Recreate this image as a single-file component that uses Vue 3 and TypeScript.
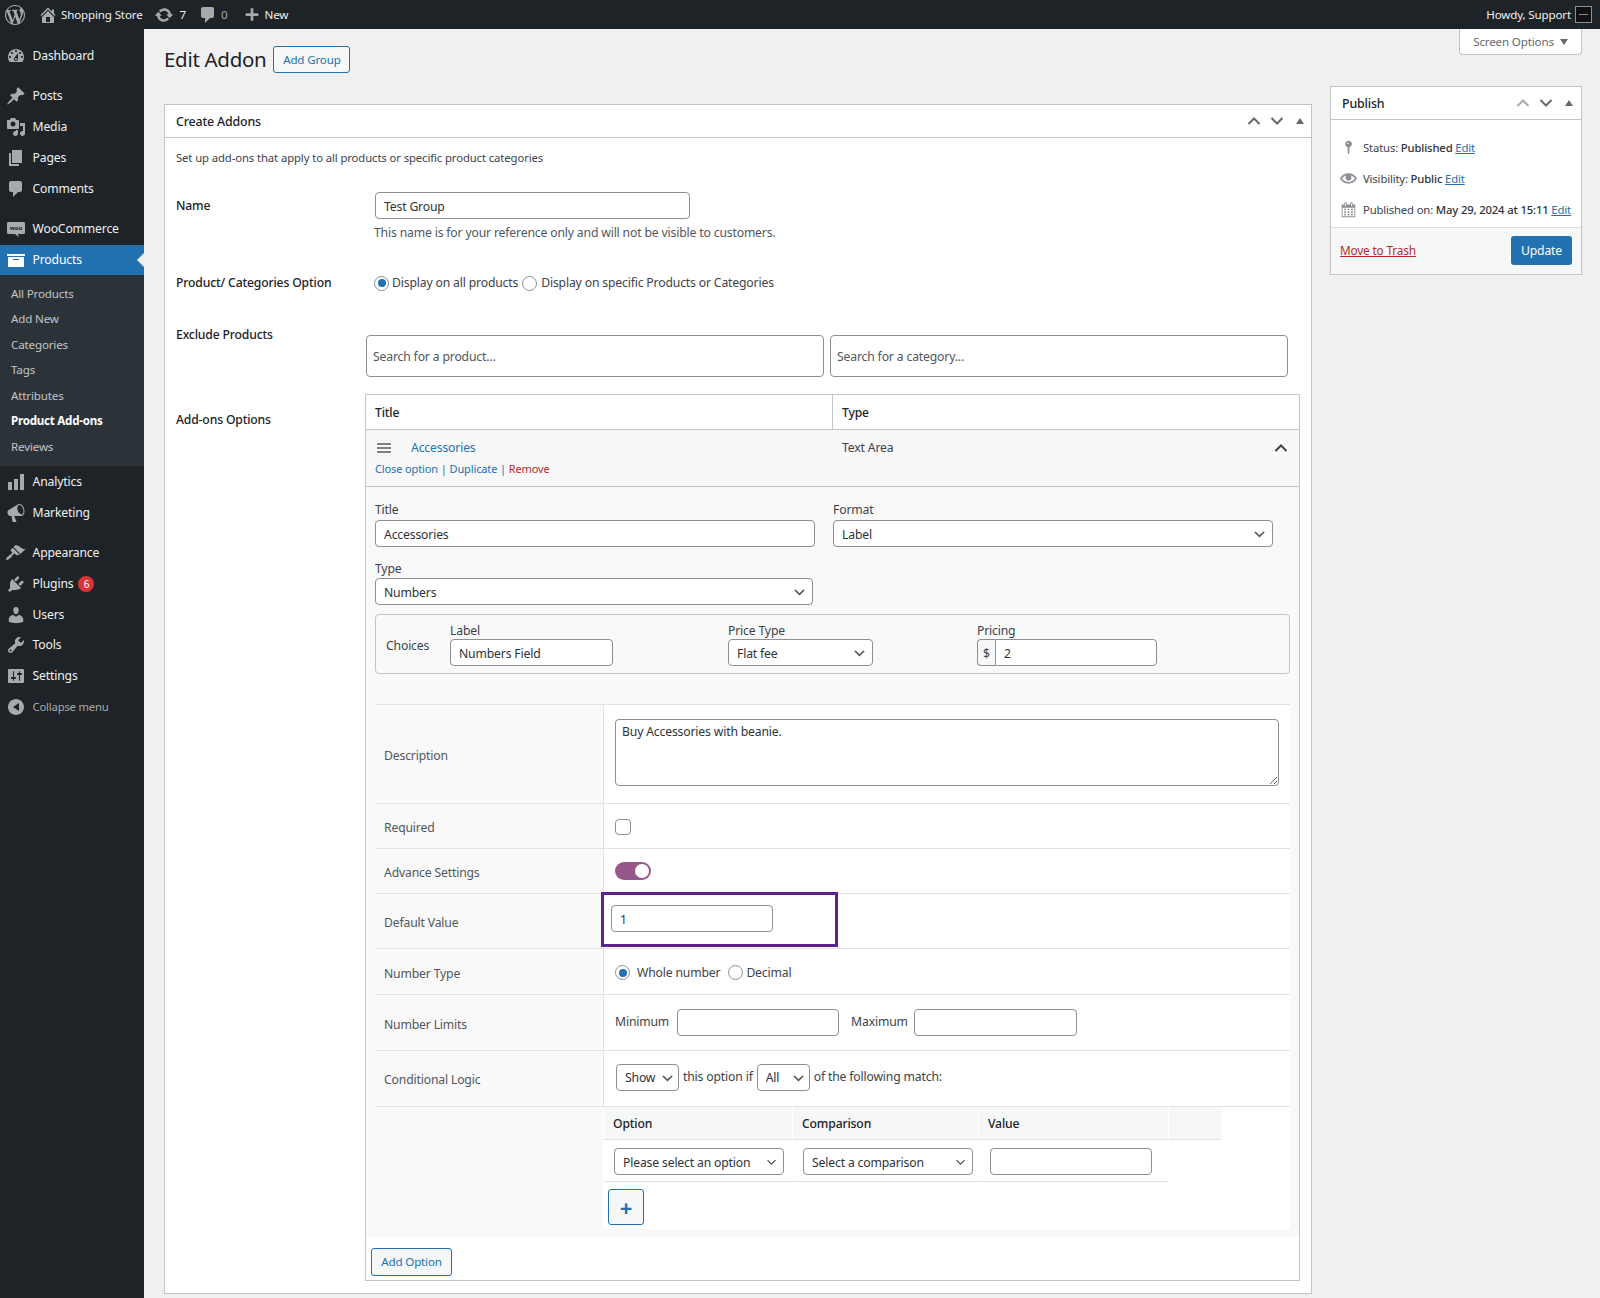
<script setup lang="ts">
interface MenuItem { label: string; d: string; sep?: boolean; current?: boolean; badge?: string; dim?: boolean; woo?: boolean }
const I = {
  wp: 'M20 10c0-5.51-4.49-10-10-10C4.48 0 0 4.49 0 10c0 5.52 4.48 10 10 10 5.51 0 10-4.48 10-10zM7.78 15.37L4.37 6.22c.55-.02 1.17-.08 1.17-.08.5-.06.44-1.13-.06-1.11 0 0-1.45.11-2.37.11-.18 0-.37 0-.58-.01C4.12 2.69 6.87 1.11 10 1.11c2.33 0 4.45.87 6.05 2.34-.68-.11-1.65.39-1.65 1.58 0 .74.45 1.36.9 2.1.35.61.55 1.36.55 2.46 0 1.49-1.4 5-1.4 5l-3.03-8.37c.54-.02.82-.17.82-.17.5-.05.44-1.25-.06-1.22 0 0-1.44.12-2.38.12-.87 0-2.33-.12-2.33-.12-.5-.03-.56 1.2-.06 1.22l.92.08 1.26 3.41zM17.41 10c.24-.64.74-1.87.43-4.25.7 1.29 1.05 2.71 1.05 4.25 0 3.29-1.73 6.24-4.4 7.78.97-2.59 1.94-5.2 2.92-7.78zM6.1 18.09C3.12 16.65 1.11 13.53 1.11 10c0-1.3.23-2.48.72-3.59C3.25 10.3 4.67 14.2 6.1 18.09zm4.03-6.63l2.58 6.98c-.86.29-1.76.45-2.71.45-.79 0-1.57-.11-2.29-.33.81-2.38 1.62-4.74 2.42-7.1z',
  home: 'M16 8.5l1.53 1.53-1.06 1.06L10 4.62l-6.47 6.47-1.06-1.06L10 2.5l4 4v-2h2v4zm-6-2.46l6 5.99V18H4v-5.97zM12 17v-5H8v5h4z',
  update: 'M10.2 3.28c3.53 0 6.43 2.61 6.92 6h2.08l-3.5 4-3.5-4h2.32c-.45-1.97-2.21-3.45-4.32-3.45-1.45 0-2.73.71-3.54 1.78L4.95 5.66C6.23 4.2 8.11 3.28 10.2 3.28zm-.4 13.44c-3.52 0-6.43-2.61-6.92-6H.8l3.5-4c1.17 1.33 2.33 2.67 3.5 4H5.48c.45 1.97 2.21 3.45 4.32 3.45 1.45 0 2.73-.71 3.54-1.78l1.71 1.95c-1.28 1.46-3.15 2.38-5.25 2.38z',
  comment: 'M5 2h9c1.1 0 2 .9 2 2v7c0 1.1-.9 2-2 2h-2l-5 5v-5H5c-1.1 0-2-.9-2-2V4c0-1.1.9-2 2-2z',
  plus: 'M17 8v3h-5.5v5.5h-3V11H3V8h5.5V2.5h3V8H17z',
  dashboard: 'M3.76 16h12.48c1.1-1.37 1.76-3.11 1.76-5 0-4.42-3.58-8-8-8s-8 3.58-8 8c0 1.89.66 3.63 1.76 5zM10 4c.55 0 1 .45 1 1s-.45 1-1 1-1-.45-1-1 .45-1 1-1zM6 6c.55 0 1 .45 1 1s-.45 1-1 1-1-.45-1-1 .45-1 1-1zm8 0c.55 0 1 .45 1 1s-.45 1-1 1-1-.45-1-1 .45-1 1-1zm-5.37 5.55L12 7v6c0 1.1-.9 2-2 2s-2-.9-2-2c0-.57.24-1.08.63-1.45zM4 10c.55 0 1 .45 1 1s-.45 1-1 1-1-.45-1-1 .45-1 1-1zm12 0c.55 0 1 .45 1 1s-.45 1-1 1-1-.45-1-1 .45-1 1-1zm-5 3c0-.55-.45-1-1-1s-1 .45-1 1 .45 1 1 1 1-.45 1-1z',
  pin: 'M10.44 3.02l1.82-1.82 6.36 6.35-1.83 1.82c-1.05-.68-2.48-.57-3.41.36l-.75.75c-.92.93-1.04 2.35-.35 3.41l-1.83 1.82-2.41-2.41-2.8 2.79c-.42.42-3.38 2.71-3.8 2.29s1.86-3.39 2.28-3.81l2.79-2.79L4.1 9.36l1.83-1.82c1.05.69 2.48.57 3.4-.36l.75-.75c.93-.92 1.05-2.35.36-3.41z',
  media: 'M13 11V4c0-.55-.45-1-1-1h-1.67L9 1H5L3.67 3H2c-.55 0-1 .45-1 1v7c0 .55.45 1 1 1h10c.55 0 1-.45 1-1zM7 4.5c1.38 0 2.5 1.12 2.5 2.5S8.38 9.5 7 9.5 4.5 8.38 4.5 7 5.62 4.5 7 4.5zM14 6h5v10.5c0 1.38-1.12 2.5-2.5 2.5S14 17.88 14 16.5s1.12-2.5 2.5-2.5c.17 0 .34.02.5.05V9h-3V6zm-4 8.05V13h2v3.5c0 1.38-1.12 2.5-2.5 2.5S7 17.88 7 16.5 8.12 14 9.5 14c.17 0 .34.02.5.05z',
  page: 'M6 15V2h10v13H6zm-1 1h8v2H3V5h2v11z',
  woo: 'M2.5 3h15c1 0 1.5.6 1.5 1.5v9c0 1-.6 1.5-1.5 1.5H12l.7 3L9 15H2.5C1.5 15 1 14.4 1 13.5v-9C1 3.6 1.6 3 2.5 3z',
  archive: 'M19 4v2H1V4h18zM2 7h16v10H2V7zm11 3V9H7v1h6z',
  chart: 'M18 18V2h-4v16h4zm-6 0V7H8v11h4zm-6 0v-8H2v8h4z',
  mega: 'M18.15 5.94c.46 1.62.38 3.22-.02 4.48-.42 1.28-1.26 2.18-2.3 2.48-.16.06-.26.06-.4.06-.06.02-.12.02-.18.02-.06.02-.14.02-.22.02h-6.8l2.22 5.5c.02.14-.06.26-.14.34-.08.1-.24.16-.34.16H6.95c-.1 0-.26-.06-.34-.16-.08-.08-.16-.2-.14-.34l-1-5.5H4.25l-.02-.02c-.5.06-1.08-.18-1.54-.62s-.88-1.08-1.06-1.88c-.24-.8-.2-1.56-.02-2.2.18-.62.58-1.08 1.06-1.3l.02-.02 9-5.4c.1-.06.18-.1.24-.16.06-.04.14-.08.24-.12.16-.08.28-.12.5-.18 1.04-.3 2.24.1 3.22.98s1.84 2.24 2.26 3.86zm-2.58 5.98h-.02c.4-.1.74-.34 1.04-.7.58-.7.86-1.76.86-3.04-.02-.64-.1-1.3-.28-1.98-.34-1.36-1.02-2.5-1.78-3.24-.38-.38-.76-.66-1.14-.82-.18-.08-.34-.12-.5-.16h-.3c-.1 0-.22.02-.32.04-.38.1-.72.34-1.02.7-.72.94-.94 2.44-.54 4.12.04.18.1.36.18.62.3 1.06.82 1.98 1.46 2.62.64.66 1.4 1.04 2.36 1.04z',
  brush: 'M14.48 11.06L7.41 3.99l1.5-1.5c.5-.56 2.3-.47 3.51.32 1.21.8 1.43 1.28 2.91 2.1 1.18.64 2.45 1.26 4.45.85zm-.71.71L6.7 4.7 4.93 6.47c-.39.39-.39 1.02 0 1.41l1.06 1.06c.39.39.39 1.03 0 1.42-.6.6-1.43 1.11-2.21 1.69-.35.26-.7.53-1.01.84C1.43 13.23 0 15.3 0 16.5c0 .17.07.29.14.36.07.07.19.14.36.14 1.2 0 3.27-1.43 4.62-2.77.31-.31.58-.66.84-1.01.58-.78 1.09-1.61 1.69-2.21.39-.39 1.03-.39 1.42 0l1.06 1.06c.39.39 1.02.39 1.41 0z',
  plugin: 'M13.11 4.36L9.87 7.6 8 5.73l3.24-3.24c.35-.34 1.05-.2 1.56.32.52.51.66 1.21.31 1.55zm-8 1.77l.91-1.12 9.01 9.01-1.19.84c-.71.71-2.63 1.16-3.82 1.16H6.14L4.9 17.26c-.59.59-1.54.59-2.12 0-.59-.58-.59-1.53 0-2.12l1.24-1.24v-3.88c0-1.13.4-3.19 1.09-3.89zm7.26 3.97l3.24-3.24c.34-.35 1.04-.21 1.55.31.52.51.66 1.21.31 1.55l-3.24 3.25z',
  users: 'M10 9.25c-2.27 0-2.73-3.44-2.73-3.44C7 4.02 7.82 2 9.97 2c2.16 0 2.98 2.02 2.71 3.81 0 0-.41 3.44-2.68 3.44zm0 2.57L12.72 10c2.39 0 4.52 2.33 4.52 4.53v2.49s-3.65 1.13-7.24 1.13c-3.65 0-7.24-1.13-7.24-1.13v-2.49c0-2.25 1.94-4.48 4.47-4.48z',
  tools: 'M16.68 9.77c-1.34 1.34-3.3 1.67-4.95.99l-5.41 6.52c-.99.99-2.59.99-3.58 0s-.99-2.59 0-3.57l6.52-5.42c-.68-1.65-.35-3.61.99-4.95 1.28-1.28 3.12-1.62 4.72-1.06l-2.89 2.89 2.82 2.82 2.86-2.87c.53 1.58.18 3.39-1.08 4.65zM3.81 16.21c.4.39 1.04.39 1.43 0 .4-.4.4-1.04 0-1.43-.39-.4-1.03-.4-1.43 0-.39.39-.39 1.03 0 1.43z',
  settings: 'M18 16V4c0-.55-.45-1-1-1H3c-.55 0-1 .45-1 1v12c0 .55.45 1 1 1h14c.55 0 1-.45 1-1zM8 11h1c.55 0 1 .45 1 1s-.45 1-1 1H8v1.5c0 .28-.22.5-.5.5s-.5-.22-.5-.5V13H6c-.55 0-1-.45-1-1s.45-1 1-1h1V5.5c0-.28.22-.5.5-.5s.5.22.5.5V11zm5-2h-1c-.55 0-1-.45-1-1s.45-1 1-1h1V5.5c0-.28.22-.5.5-.5s.5.22.5.5V7h1c.55 0 1 .45 1 1s-.45 1-1 1h-1v5.5c0 .28-.22.5-.5.5s-.5-.22-.5-.5V9z',
  collapse: 'M18 10c0-4.42-3.58-8-8-8s-8 3.58-8 8 3.58 8 8 8 8-3.58 8-8zm-5-4v8l-6-4z',
  status: 'M14 6c0 1.86-1.28 3.41-3 3.86V16c0 1-1 2-1 2s-1-1-1-2V9.86C7.28 9.41 6 7.86 6 6c0-2.21 1.79-4 4-4s4 1.79 4 4zM8 5c0 .55.45 1 1 1s1-.45 1-1-.45-1-1-1-1 .45-1 1z',
  eye: 'M19.7 9.4C17.7 6 14 3.9 10 3.9S2.3 6 .3 9.4L0 10l.3.6c2 3.4 5.7 5.5 9.7 5.5s7.7-2.1 9.7-5.5l.3-.6-.3-.6zM10 14.1c-3.1 0-6-1.6-7.7-4.1C3.6 8 5.7 6.6 8 6.1c-.9.6-1.5 1.7-1.5 2.9 0 1.9 1.6 3.5 3.5 3.5s3.5-1.6 3.5-3.5c0-1.2-.6-2.3-1.5-2.9 2.3.5 4.4 1.9 5.7 3.9-1.7 2.5-4.6 4.1-7.7 4.1z',
  calendar: 'M15 4h3v15H2V4h3V3c0-.41.15-.76.44-1.06.29-.29.65-.44 1.06-.44s.77.15 1.06.44c.29.3.44.65.44 1.06v1h4V3c0-.41.15-.76.44-1.06.29-.29.65-.44 1.06-.44s.77.15 1.06.44c.29.3.44.65.44 1.06v1zM6 3v2.5c0 .14.05.26.15.36.09.09.21.14.35.14s.26-.05.35-.14c.1-.1.15-.22.15-.36V3c0-.14-.05-.26-.15-.35-.09-.1-.21-.15-.35-.15s-.26.05-.35.15c-.1.09-.15.21-.15.35zm7 0v2.5c0 .14.05.26.14.36.1.09.22.14.36.14s.26-.05.36-.14c.09-.1.14-.22.14-.36V3c0-.14-.05-.26-.14-.35-.1-.1-.22-.15-.36-.15s-.26.05-.36.15c-.09.09-.14.21-.14.35zm4 15V8H3v10h14zM7 9v2H5V9h2zm2 0h2v2H9V9zm4 2V9h2v2h-2zm-6 1v2H5v-2h2zm2 0h2v2H9v-2zm4 2v-2h2v2h-2zm-6 1v2H5v-2h2zm4 2H9v-2h2v2zm4 0h-2v-2h2v2z'
}
const menuTop: MenuItem[] = [
  { label: 'Dashboard', d: I.dashboard },
  { label: 'Posts', d: I.pin, sep: true },
  { label: 'Media', d: I.media },
  { label: 'Pages', d: I.page },
  { label: 'Comments', d: I.comment },
  { label: 'WooCommerce', d: I.woo, sep: true, woo: true },
]
const submenu = ['All Products', 'Add New', 'Categories', 'Tags', 'Attributes', 'Product Add-ons', 'Reviews']
const menuBottom: MenuItem[] = [
  { label: 'Analytics', d: I.chart },
  { label: 'Marketing', d: I.mega },
  { label: 'Appearance', d: I.brush, sep: true },
  { label: 'Plugins', d: I.plugin, badge: '6' },
  { label: 'Users', d: I.users },
  { label: 'Tools', d: I.tools },
  { label: 'Settings', d: I.settings },
  { label: 'Collapse menu', d: I.collapse, dim: true },
]
</script>

<template>
  <div class="page">
    <header class="adminbar">
      <svg class="bar-wp" viewBox="0 0 20 20"><path :d="I.wp" /></svg>
      <svg class="bar-home" viewBox="0 0 20 20"><path :d="I.home" /></svg>
      <span class="bar-site">Shopping Store</span>
      <svg class="bar-update" viewBox="0 0 20 20"><path :d="I.update" /></svg>
      <span class="bar-count">7</span>
      <svg class="bar-comment" viewBox="0 0 20 20"><path :d="I.comment" /></svg>
      <span class="bar-zero">0</span>
      <svg class="bar-plus" viewBox="0 0 20 20"><path :d="I.plus" /></svg>
      <span class="bar-new">New</span>
      <span class="bar-howdy">Howdy, Support</span>
      <span class="bar-avatar"><i></i></span>
    </header>

    <div class="layout">
      <nav class="sidebar">
        <a v-for="m in menuTop" :key="m.label" class="mi" :class="{ sep: m.sep }">
          <svg class="mi-ic" viewBox="0 0 20 20">
            <path :d="m.d" />
            <text v-if="m.woo" x="10" y="11" class="woo-t">woo</text>
          </svg>
          <span>{{ m.label }}</span>
        </a>
        <a class="mi current">
          <svg class="mi-ic" viewBox="0 0 20 20"><path :d="I.archive" /></svg>
          <span>Products</span>
          <i class="arrow"></i>
        </a>
        <ul class="sub">
          <li v-for="s in submenu" :key="s" :class="{ on: s === 'Product Add-ons' }">{{ s }}</li>
        </ul>
        <a v-for="m in menuBottom" :key="m.label" class="mi" :class="{ sep: m.sep, dim: m.dim }">
          <svg class="mi-ic" viewBox="0 0 20 20"><path :d="m.d" /></svg>
          <span>{{ m.label }}</span>
          <b v-if="m.badge" class="badge">{{ m.badge }}</b>
        </a>
      </nav>

      <main class="main">
        <div class="col-left">
          <div class="heading">
            <h1>Edit Addon</h1>
            <button class="btn">Add Group</button>
          </div>

          <section class="box">
            <div class="box-head">
              <h2>Create Addons</h2>
              <svg class="hc" viewBox="0 0 14 10"><path d="M1.5 8L7 2.5 12.5 8" /></svg>
              <svg class="hc" viewBox="0 0 14 10"><path d="M1.5 2L7 7.5 12.5 2" /></svg>
              <span class="tri-up"></span>
            </div>
            <div class="box-body">
              <p class="intro">Set up add-ons that apply to all products or specific product categories</p>

              <div class="f-row name-row">
                <label class="f-label">Name</label>
                <div>
                  <input class="inp name-inp" value="Test Group" />
                  <p class="help">This name is for your reference only and will not be visible to customers.</p>
                </div>
              </div>

              <div class="f-row cat-row">
                <label class="f-label">Product/ Categories Option</label>
                <div class="radios">
                  <input type="radio" name="scope" class="radio" checked />
                  <span>Display on all products</span>
                  <input type="radio" name="scope" class="radio r2" />
                  <span class="t2">Display on specific Products or Categories</span>
                </div>
              </div>

              <div class="f-row ex-row">
                <label class="f-label ex-label">Exclude Products</label>
                <div class="searches">
                  <input class="inp search" placeholder="Search for a product..." />
                  <input class="inp search" placeholder="Search for a category..." />
                </div>
              </div>

              <div class="f-row add-row">
                <label class="f-label add-label">Add-ons Options</label>
                <div class="addons">
                  <div class="a-head">
                    <div class="a-title">Title</div>
                    <div class="a-type">Type</div>
                  </div>
                  <div class="a-item">
                    <div class="a-item-main">
                      <div class="a-item-title">
                        <svg class="burger" viewBox="0 0 14 10"><path d="M0 1h14M0 5h14M0 9h14" /></svg>
                        <a class="link">Accessories</a>
                      </div>
                      <div class="a-actions">
                        <a class="link">Close option</a> <em>|</em> <a class="link">Duplicate</a> <em>|</em> <a class="danger">Remove</a>
                      </div>
                    </div>
                    <div class="a-item-type">Text Area</div>
                    <svg class="a-chev" viewBox="0 0 14 10"><path d="M1.5 8L7 2.5 12.5 8" /></svg>
                  </div>

                  <div class="a-body">
                    <div class="two">
                      <div class="fld">
                        <label>Title</label>
                        <input class="inp w440" value="Accessories" />
                      </div>
                      <div class="fld">
                        <label>Format</label>
                        <select class="inp sel w440"><option>Label</option></select>
                      </div>
                    </div>
                    <div class="fld type-fld">
                      <label>Type</label>
                      <select class="inp sel w438"><option>Numbers</option></select>
                    </div>
                    <div class="choices">
                      <span class="ch-title">Choices</span>
                      <div class="fld ch1">
                        <label>Label</label>
                        <input class="inp w163" value="Numbers Field" />
                      </div>
                      <div class="fld ch2">
                        <label>Price Type</label>
                        <select class="inp sel w145"><option>Flat fee</option></select>
                      </div>
                      <div class="fld ch3">
                        <label>Pricing</label>
                        <div class="price">
                          <span>$</span>
                          <input class="inp" value="2" />
                        </div>
                      </div>
                    </div>

                    <div class="set">
                      <div class="s-row r-desc">
                        <div class="s-l">Description</div>
                        <div class="s-r"><textarea class="inp ta">Buy Accessories with beanie.</textarea></div>
                      </div>
                      <div class="s-row r-req">
                        <div class="s-l">Required</div>
                        <div class="s-r"><input type="checkbox" class="check" /></div>
                      </div>
                      <div class="s-row r-req">
                        <div class="s-l">Advance Settings</div>
                        <div class="s-r"><span class="toggle"><i></i></span></div>
                      </div>
                      <div class="s-row r-def">
                        <div class="s-l">Default Value</div>
                        <div class="s-r s-flat">
                          <div class="mark"><input class="inp w162" value="1" /></div>
                        </div>
                      </div>
                      <div class="s-row r-num">
                        <div class="s-l">Number Type</div>
                        <div class="s-r">
                          <input type="radio" name="nt" class="radio" checked />
                          <span class="nt1">Whole number</span>
                          <input type="radio" name="nt" class="radio" />
                          <span class="nt2">Decimal</span>
                        </div>
                      </div>
                      <div class="s-row r-lim">
                        <div class="s-l">Number Limits</div>
                        <div class="s-r lim">
                          <span class="lim-a">Minimum</span>
                          <input class="inp w162" />
                          <span class="lim-b">Maximum</span>
                          <input class="inp w163" />
                        </div>
                      </div>
                      <div class="s-row r-lim r-cond">
                        <div class="s-l">Conditional Logic</div>
                        <div class="s-r cond">
                          <select class="inp sel sel-show"><option>Show</option></select>
                          <span>this option if</span>
                          <select class="inp sel sel-all"><option>All</option></select>
                          <span>of the following match:</span>
                        </div>
                      </div>
                      <div class="s-row r-rules">
                        <div class="s-l"></div>
                        <div class="rules">
                          <div class="rule-grid">
                            <div class="rh">Option</div>
                            <div class="rh">Comparison</div>
                            <div class="rh">Value</div>
                            <div class="rh"></div>
                            <div class="rc"><select class="inp sel sel-sm w170"><option>Please select an option</option></select></div>
                            <div class="rc"><select class="inp sel sel-sm w170"><option>Select a comparison</option></select></div>
                            <div class="rc rc-v"><input class="inp w162" /></div>
                          </div>
                          <button class="plus-btn">+</button>
                        </div>
                      </div>
                    </div>
                  </div>

                  <div class="a-foot"><button class="btn add-opt">Add Option</button></div>
                </div>
              </div>
            </div>
          </section>
        </div>

        <aside class="col-right">
          <button class="screen">Screen Options <i></i></button>
          <section class="box publish">
            <div class="box-head">
              <h2>Publish</h2>
              <svg class="hc light" viewBox="0 0 14 10"><path d="M1.5 8L7 2.5 12.5 8" /></svg>
              <svg class="hc" viewBox="0 0 14 10"><path d="M1.5 2L7 7.5 12.5 2" /></svg>
              <span class="tri-up"></span>
            </div>
            <div class="pub-body">
              <div class="pub-row"><svg viewBox="0 0 20 20"><path :d="I.status" /></svg><span>Status: <b>Published</b> <a class="ul">Edit</a></span></div>
              <div class="pub-row"><svg viewBox="0 0 20 20"><path :d="I.eye" /></svg><span>Visibility: <b>Public</b> <a class="ul">Edit</a></span></div>
              <div class="pub-row"><svg viewBox="0 0 20 20"><path :d="I.calendar" /></svg><span>Published on: <b>May 29, 2024 at 15:11</b> <a class="ul">Edit</a></span></div>
            </div>
            <div class="pub-foot">
              <a class="trash">Move to Trash</a>
              <button class="update">Update</button>
            </div>
          </section>
        </aside>
      </main>
    </div>
  </div>
</template>

<style>
html, body { margin: 0; padding: 0; background: #f0f0f1; }
</style>

<style scoped>
.page { width: 1600px; height: 1298px; overflow: hidden; background: #f0f0f1; color: #3c434a; font: 12.2px/20px "Noto Sans", "Open Sans", sans-serif; letter-spacing: -.16px; }
* { box-sizing: border-box; }
p, h1, h2, ul { margin: 0; padding: 0; }
button, input, select, textarea { font: inherit; letter-spacing: inherit; color: #2c3338; }

.adminbar { height: 29px; background: #1d2327; color: #f0f0f1; display: flex; align-items: center; font-size: 11.6px; }
.adminbar svg { fill: #a7aaad; flex: none; }
.bar-wp { width: 20px; height: 20px; margin-left: 5px; }
.bar-home { width: 20px; height: 20px; margin-left: 13px; }
.bar-site { margin-left: 3px; }
.bar-update { width: 20px; height: 20px; margin-left: 11px; }
.bar-count { margin-left: 6px; }
.bar-comment { width: 20px; height: 20px; margin-left: 12px; }
.bar-zero { margin-left: 3px; color: #a7aaad; }
.bar-plus { width: 18px; height: 18px; margin-left: 15px; }
.bar-new { margin-left: 4px; }
.bar-howdy { margin-left: auto; }
.bar-avatar { width: 17px; height: 17px; margin: 0 8px 0 4px; border: 1px solid #8c8f94; display: flex; align-items: center; justify-content: center; background: #111; }
.bar-avatar i { width: 9px; height: 1px; background: #8c8f94; }

.layout { display: flex; height: 1269px; }
.sidebar { width: 144px; flex: none; background: #1d2327; padding-top: 11.6px; color: #f0f0f1; }
.mi { display: flex; align-items: center; height: 30.8px; }
.mi.sep { margin-top: 9.6px; }
.mi-ic { width: 20px; height: 20px; margin: 0 6.5px 0 6px; fill: #a7aaad; flex: none; }
.woo-t { font-size: 6px; font-weight: 700; fill: #1d2327; text-anchor: middle; letter-spacing: 0; }
.mi.current { background: #2271b1; color: #fff; }
.mi.current .mi-ic { fill: #fff; }
.arrow { margin-left: auto; width: 0; height: 0; border: 7px solid transparent; border-right-color: #f0f0f1; border-left-width: 0; }
.mi.dim { color: #a7aaad; font-size: 11.3px; letter-spacing: -.2px; }
.badge { margin-left: 5px; width: 16px; height: 16px; border-radius: 50%; background: #d63638; color: #fff; font-size: 10px; font-weight: 400; line-height: 16px; text-align: center; }
.sub { list-style: none; background: #2c3338; padding: 5.4px 0 7px; height: 191px; }
.sub li { height: 25.5px; line-height: 25px; padding-left: 11px; color: #c3c4c7; font-size: 11.6px; }
.sub li.on { color: #fff; font-weight: 700; letter-spacing: -.25px; }

.main { flex: 1; display: flex; gap: 18px; padding: 0 18px 0 20px; }
.col-left { width: 1148px; flex: none; padding-top: 17px; }
.heading { display: flex; align-items: center; height: 27px; margin-bottom: 31px; }
h1 { font-size: 20.5px; font-weight: 400; line-height: 27px; color: #1d2327; letter-spacing: -.3px; }
.btn { height: 27px; width: 77px; margin-left: 7px; padding: 0; border: 1px solid #2271b1; border-radius: 3px; background: #f6f7f7; color: #2271b1; font-size: 11.6px; }

.box { background: #fff; border: 1px solid #c3c4c7; }
.box-head { height: 33px; display: flex; align-items: center; padding: 0 7px 0 11px; border-bottom: 1px solid #c3c4c7; }
h2 { font-size: 12.4px; font-weight: 500; color: #1d2327; margin-right: auto; padding-top: 2px; }
.hc { width: 14px; height: 10px; fill: none; stroke: #646970; stroke-width: 2; margin-left: 9px; }
.hc.light { stroke: #a7aaad; }
.publish .box-head { padding-right: 8px; }
.tri-up { width: 0; height: 0; margin-left: 12px; margin-right: 0; border: 4.5px solid transparent; border-bottom: 6px solid #646970; border-top: 0; }

.box-body { padding: 10px 11px 10px 11px; height: 1155px; }
.intro { font-size: 11.3px; letter-spacing: -.1px; }
.f-row { display: flex; }
.f-label { color: #1d2327; font-weight: 500; width: 190px; flex: none; }
.name-row { margin-top: 24px; }
.name-row .f-label { padding-top: 4px; width: 199px; }
.name-inp { width: 315px; }
.help { margin: 4px 0 0 -1px; color: #50575e; }
.cat-row { margin-top: 30px; }
.cat-row .f-label { width: 199px; }
.radios { display: flex; align-items: center; }
.radios span { margin-left: 3px; }
.radio { appearance: none; width: 15px; height: 15px; margin: 0; border: 1px solid #8c8f94; border-radius: 50%; background: #fff; display: inline-flex; align-items: center; justify-content: center; flex: none; }
.radio:checked::before { content: ""; width: 8px; height: 8px; border-radius: 50%; background: #2271b1; }
.radios > .radio:first-child { margin-left: -1px; }
.radios .r2 { margin-left: 4px; }
.radios .t2 { margin-left: 4px; }
.ex-row { margin-top: 42px; }
.ex-label { margin-top: -10px; height: 20px; }
.searches { display: flex; gap: 6px; }
.add-row { margin-top: 17px; }
.add-label { padding-top: 16px; }
.inp { height: 27px; padding: 2px 8px 0; border: 1px solid #8c8f94; border-radius: 4px; background: #fff; outline: none; display: block; }
.inp::placeholder { color: #50575e; opacity: 1; }
.search { width: 458px; height: 42px; padding: 0 6px; }
.sel { appearance: none; padding-right: 24px; background: #fff url('data:image/svg+xml;utf8,<svg xmlns="http://www.w3.org/2000/svg" viewBox="0 0 20 20"><path d="M5 6l5 5 5-5 2 1-7 7-7-7z" fill="%23555"/></svg>') no-repeat right 5px top 55%/15px 15px; }

.addons { width: 935px; margin-left: -1px; border: 1px solid #c3c4c7; background: #fff; }
.a-head { height: 35px; display: flex; border-bottom: 1px solid #c3c4c7; font-weight: 500; color: #1d2327; line-height: 35px; }
.a-title { width: 467px; padding-left: 9px; border-right: 1px solid #c3c4c7; }
.a-type { padding-left: 9px; }
.a-item { height: 57px; display: flex; background: #f8f8f8; border-bottom: 1px solid #c3c4c7; position: relative; }
.a-item-main { width: 467px; padding: 8px 0 0 9px; }
.a-item-title { display: flex; align-items: center; height: 20px; margin-left: 2px; }
.burger { width: 14px; height: 10px; stroke: #50575e; stroke-width: 1.4; margin-right: 20px; }
.link { color: #2271b1; }
.danger { color: #b32d2e; }
.a-actions { font-size: 11px; margin-top: 1px; line-height: 20px; letter-spacing: -.12px; }
.a-actions em { font-style: normal; color: #2271b1; }
.a-item-type { padding: 8px 0 0 9px; }
.a-chev { position: absolute; right: 11px; top: 13px; width: 14px; height: 10px; fill: none; stroke: #3c434a; stroke-width: 2; }

.a-body { background: #f9f9f9; padding: 12px 0 8px 9px; height: 750px; }
.two { display: flex; gap: 18px; }
.fld label { display: block; line-height: 20px; height: 21px; padding-top: 1px; }
.w440 { width: 440px; }
.w438 { width: 438px; }
.w163 { width: 163px; }
.w162 { width: 162px; }
.w145 { width: 145px; }
.w170 { width: 170px; }
.type-fld { margin-top: 10px; }
.type-fld label { padding-top: 2px; }
.choices { width: 915px; height: 60px; margin-top: 9px; border: 1px solid #c3c4c7; border-radius: 4px; display: flex; padding-left: 10px; }
.ch-title { width: 64px; line-height: 61px; }
.choices .fld { padding-top: 5px; }
.choices .fld label { height: 19px; line-height: 20px; }
.ch2 { margin-left: 115px; }
.ch3 { margin-left: 104px; }
.price { display: flex; }
.price span { width: 18px; height: 27px; border: 1px solid #8c8f94; border-right: 0; border-radius: 4px 0 0 4px; background: #f6f7f7; text-align: center; line-height: 27px; margin-right: 0; }
.price .inp { width: 162px; border-radius: 0 4px 4px 0; }

.set { margin: 30px 0 0 0; width: 915px; }
.s-row { display: flex; border-top: 1px solid #e2e2e2; }
.s-l { width: 228px; padding-left: 9px; padding-top: 4px; display: flex; align-items: center; color: #50575e; flex: none; }
.r-cond .s-l { padding-top: 2px; }
.s-r { flex: 1; background: #fff; border-left: 1px solid #e2e2e2; padding-left: 11px; display: flex; align-items: center; }
.r-desc { height: 99px; }
.ta { width: 664px; height: 67px; padding: 2px 6px; line-height: 20px; resize: both; margin-bottom: 4px; }
.r-req { height: 45px; }
.check { appearance: none; width: 16px; height: 16px; margin: 2px 0 0; border: 1px solid #8c8f94; border-radius: 4px; background: #fff; }
.toggle { width: 36px; height: 18px; border-radius: 9px; background: #96588a; display: flex; justify-content: flex-end; align-items: center; padding-right: 2px; }
.toggle i { width: 14px; height: 14px; border-radius: 50%; background: #fff; }
.r-def { height: 55px; }
.s-flat { padding: 0; align-items: flex-start; }
.mark { width: 237px; height: 55px; margin: -2px 0 0 -3px; border: 3px solid #5f2388; padding: 10px 0 0 7px; background: #fff; }
.mark .inp { padding-top: 2px; }
.r-num { height: 46px; }
.r-num .s-r { padding-top: 2px; }
.nt1 { margin: 0 8px 0 7px; }
.nt2 { margin-left: 3px; }
.r-lim { height: 56px; }
.lim-a { margin: 0 8px 2px 0; }
.lim-b { margin: 0 6px 2px 12px; }
.cond span { margin: 0 4px; transform: translateY(-2px); }
.cond select { margin-bottom: 2px; padding-top: 0; }
.sel-show { width: 63px; padding-right: 18px; margin-left: 1px; background-position: right 3px top 55%; }
.sel-all { width: 53px; background-position: right 3px top 55%; }
.r-rules { height: 123px; }
.r-rules .s-l { padding: 0; }
.rules { flex: 1; background: #fff; }
.rule-grid { display: grid; grid-template-columns: 189px 186px 190px 53px; width: 618px; margin-left: 1px; }
.rh { height: 33px; background: #f6f7f7; border-bottom: 1px solid #e2e2e2; border-right: 1px solid #fff; padding-left: 9px; font-weight: 500; color: #1d2327; line-height: 33px; }
.rc { height: 42px; border-bottom: 1px solid #e2e2e2; border-right: 1px solid #fff; padding: 8px 0 0 10px; }
.rc-v { padding-left: 11px; }
.sel-sm { padding-left: 8px; background-size: 13px 13px; }
.plus-btn { display: block; width: 36px; height: 36px; margin: 7px 0 0 5px; padding: 0; border: 1px solid #2271b1; border-radius: 3px; background: #f6f7f7; color: #2271b1; font-size: 22px; font-weight: 700; line-height: 26px; }
.a-foot { padding: 11px 0 4px 5px; }
.add-opt { display: block; width: 81px; height: 28px; margin: 0; }

.col-right { width: 252px; flex: none; display: flex; flex-direction: column; align-items: flex-end; }
.screen { width: 123px; height: 26px; padding: 0; border: 1px solid #c3c4c7; border-top: 0; border-radius: 0 0 4px 4px; background: #fff; color: #646970; font-size: 11.6px; margin-bottom: 31px; display: flex; align-items: center; justify-content: center; gap: 6px; }
.screen i { width: 0; height: 0; border: 4px solid transparent; border-top: 6px solid #646970; border-bottom: 0; }
.publish { width: 252px; }
.pub-body { padding: 12px 0 0 0; height: 107px; }
.pub-row { height: 31px; display: flex; align-items: center; padding-left: 9px; font-size: 11.3px; white-space: nowrap; }
.pub-row svg { width: 17px; height: 17px; fill: #8c8f94; margin-right: 6px; flex: none; }
.pub-row b { font-weight: 500; color: #2c3338; }
.ul { color: #2271b1; text-decoration: underline; }
.pub-foot { height: 47px; display: flex; align-items: center; justify-content: space-between; padding: 0 9px 2px 9px; background: #f6f7f7; border-top: 1px solid #dcdcde; }
.trash { color: #b32d2e; text-decoration: underline; font-size: 11.8px; padding-bottom: 1px; }
.update { width: 61px; height: 29px; padding: 2px 0 0; border: 0; border-radius: 3px; background: #2271b1; color: #fff; }
</style>
